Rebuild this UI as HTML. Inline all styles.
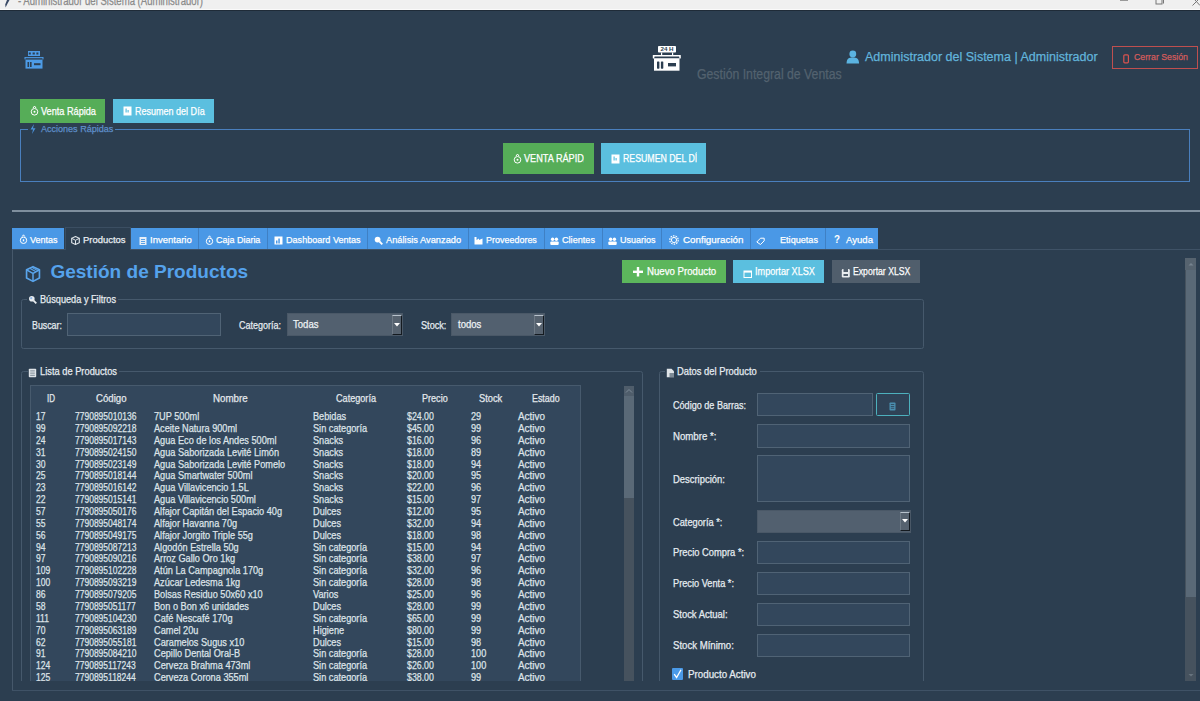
<!DOCTYPE html><html><head><meta charset="utf-8"><style>
html,body{margin:0;padding:0;}
body{width:1200px;height:701px;overflow:hidden;position:relative;background:#2c3e50;font-family:"Liberation Sans",sans-serif;}
.r{position:absolute;}
.t{position:absolute;white-space:nowrap;line-height:1.117em;transform-origin:0 0;-webkit-text-stroke:0.25px currentColor;}
.clip{position:absolute;overflow:hidden;}
</style></head><body>
<div class="r" style="left:0px;top:0px;width:1200px;height:10px;background:#f0f0f0;"></div>
<div class="r" style="left:0px;top:9px;width:1200px;height:1px;background:#fafafa;"></div>
<div class="r" style="left:0px;top:10px;width:1200px;height:1px;background:#1f2b38;"></div>
<span class="t" style="left:18.00px;top:-5.01px;font-size:12.50px;color:#8a8a8a;transform:scaleX(0.7653);">- Administrador del Sistema (Administrador)</span>
<svg class="r" style="left:3px;top:0px;" width="8" height="8" viewBox="0 0 8 8"><path d="M6.5 0 L4 0 L2.2 4.5 L2.6 7.5 L4.2 4.2 Z" fill="#3a4a66"/></svg>
<div class="r" style="left:1120px;top:0px;width:8px;height:1px;background:#9a9a9a;"></div>
<svg class="r" style="left:1155px;top:0px;" width="10" height="6" viewBox="0 0 10 6"><rect x="1" y="-2" width="6" height="6" fill="none" stroke="#777" stroke-width="1"/><path d="M3 -2 H8.5 V3.5" fill="none" stroke="#777" stroke-width="1"/></svg>
<svg class="r" style="left:1192px;top:0px;" width="8" height="6" viewBox="0 0 8 6"><path d="M0.5 5.5 L6 0 M8 5.5 L3 0" stroke="#777" stroke-width="1"/></svg>
<svg class="r" style="left:24px;top:50px;" width="20" height="20" viewBox="0 0 20 20"><g fill="#4d9be6">
<rect x="4" y="1" width="12" height="5"/>
<rect x="0.5" y="7" width="19" height="2.4"/>
<rect x="1.5" y="10" width="17" height="8.6"/>
</g><g fill="#2c3e50"><rect x="4.8" y="2.5" width="2" height="2"/><rect x="8.6" y="2.5" width="2.2" height="2"/><rect x="12.4" y="2.5" width="2" height="2"/>
<rect x="1.5" y="7.9" width="17" height="0.9"/><rect x="3.5" y="12" width="1.6" height="5"/><rect x="6" y="12" width="1.6" height="5"/><rect x="10" y="13.2" width="6.5" height="2"/></g></svg>
<svg class="r" style="left:652px;top:45px;" width="30" height="27" viewBox="0 0 30 27"><g fill="#ffffff">
<rect x="6" y="1" width="18" height="6.5" rx="0.8"/>
<rect x="9" y="7.5" width="1.2" height="2.5"/><rect x="20" y="7.5" width="1.2" height="2.5"/>
<rect x="0.8" y="10" width="28" height="3.5" rx="0.5"/>
<rect x="2" y="13.5" width="25.5" height="12.2"/>
</g><g fill="#2c3e50"><rect x="2.3" y="11.6" width="25" height="1.5" rx="0.5"/>
<rect x="5" y="16.4" width="2.4" height="7.3" rx="0.6"/><rect x="8.9" y="16.4" width="2.4" height="7.3" rx="0.6"/><rect x="16" y="18" width="8" height="3.4"/></g>
<text x="15" y="6.3" font-size="6.2" font-weight="bold" font-family="Liberation Sans" fill="#2c3e50" text-anchor="middle">24 H</text></svg>
<span class="t" style="left:697.30px;top:67.31px;font-size:14.24px;color:#53626f;transform:scaleX(0.8619);">Gestión Integral de Ventas</span>
<svg class="r" style="left:846px;top:50px;" width="14" height="14" viewBox="0 0 14 14"><circle cx="6.8" cy="4" r="3.4" fill="#5bb3e0"/><path d="M0.5 13.5 C0.8 8.5 3 7.6 6.8 7.6 C10.6 7.6 12.8 8.5 13.1 13.5 Z" fill="#5bb3e0"/></svg>
<span class="t" style="left:865.30px;top:49.24px;font-size:13.66px;color:#62b5dc;transform:scaleX(0.9156);">Administrador del Sistema | Administrador</span>
<div class="r" style="left:1112px;top:46px;width:86px;height:22.5px;border:1px solid #bf4f4f;box-sizing:border-box;"></div>
<svg class="r" style="left:1123px;top:54px;" width="7" height="10" viewBox="0 0 7 10"><rect x="0.8" y="0.8" width="4.6" height="8" rx="1" fill="none" stroke="#d9534f" stroke-width="1.2"/></svg>
<span class="t" style="left:1134.00px;top:51.79px;font-size:9.74px;color:#d45c5c;transform:scaleX(0.8989);">Cerrar Sesión</span>
<div class="r" style="left:20px;top:99px;width:85px;height:23.5px;background:#56ad58;"></div>
<svg class="r" style="left:30px;top:105px;" width="9" height="11" viewBox="0 0 9 11"><circle cx="4.5" cy="6.8" r="3.3" fill="none" stroke="#fff" stroke-width="1"/><path d="M3 3 L4.5 1 L6 3" fill="none" stroke="#fff" stroke-width="1"/><circle cx="4.5" cy="6.8" r="1" fill="#fff"/></svg>
<span class="t" style="left:41.00px;top:105.07px;font-size:10.76px;color:#ffffff;transform:scaleX(0.8514);">Venta Rápida</span>
<div class="r" style="left:113px;top:99px;width:101px;height:23.5px;background:#5bbfdf;"></div>
<svg class="r" style="left:123px;top:106px;" width="10" height="10" viewBox="0 0 10 10"><rect x="0.5" y="0.5" width="8" height="9" fill="#fff"/><rect x="2.5" y="2.5" width="1.2" height="4" fill="#5bbfdf"/><rect x="4.5" y="4" width="1.2" height="2.5" fill="#5bbfdf"/></svg>
<span class="t" style="left:134.70px;top:105.07px;font-size:10.76px;color:#ffffff;transform:scaleX(0.8386);">Resumen del Día</span>
<div class="r" style="left:20px;top:129px;width:1px;height:53px;background:#4a7fbd;"></div>
<div class="r" style="left:20px;top:181px;width:1170px;height:1px;background:#4a7fbd;"></div>
<div class="r" style="left:1189px;top:129px;width:1px;height:53px;background:#4a7fbd;"></div>
<div class="r" style="left:20px;top:129px;width:8px;height:1px;background:#4a7fbd;"></div>
<div class="r" style="left:115px;top:129px;width:1075px;height:1px;background:#4a7fbd;"></div>
<svg class="r" style="left:30px;top:124px;" width="6" height="10" viewBox="0 0 6 10"><path d="M4 0 L0.5 5.5 L3 5.5 L2 10 L5.5 4.3 L3 4.3 Z" fill="#4a90d9"/></svg>
<span class="t" style="left:41.00px;top:123.69px;font-size:9.74px;color:#5f8fca;transform:scaleX(0.9276);">Acciones Rápidas</span>
<div class="r" style="left:503px;top:143px;width:91px;height:31px;background:#56ad58;"></div>
<svg class="r" style="left:513px;top:153px;" width="9" height="11" viewBox="0 0 9 11"><circle cx="4.5" cy="6.8" r="3.3" fill="none" stroke="#fff" stroke-width="1"/><path d="M3 3 L4.5 1 L6 3" fill="none" stroke="#fff" stroke-width="1"/><circle cx="4.5" cy="6.8" r="1" fill="#fff"/></svg>
<div class="clip" style="left:523.3px;top:150.9px;width:60.5px;height:13.8px"><span class="t" style="left:524.30px;top:152.90px;font-size:10.61px;color:#ffffff;transform:scaleX(0.8632);left:1.00px;top:2px">VENTA RÁPIDA</span></div>
<div class="r" style="left:601px;top:143px;width:105px;height:31px;background:#5bbfdf;"></div>
<svg class="r" style="left:611px;top:154px;" width="10" height="10" viewBox="0 0 10 10"><rect x="0.5" y="0.5" width="8" height="9" fill="#fff"/><rect x="2.5" y="2.5" width="1.2" height="4" fill="#5bbfdf"/><rect x="4.5" y="4" width="1.2" height="2.5" fill="#5bbfdf"/></svg>
<div class="clip" style="left:622.3px;top:150.9px;width:74.5px;height:13.8px"><span class="t" style="left:623.30px;top:152.90px;font-size:10.61px;color:#ffffff;transform:scaleX(0.8257);left:1.00px;top:2px">RESUMEN DEL DÍA</span></div>
<div class="r" style="left:12px;top:210px;width:1188px;height:2px;background:#7f8f9e;"></div>
<div class="r" style="left:12px;top:249px;width:1188px;height:1px;background:#3f5266;"></div>
<div class="r" style="left:12px;top:249px;width:1px;height:442px;background:#46586b;"></div>
<div class="r" style="left:12px;top:690px;width:1188px;height:1px;background:#3f5266;"></div>
<div class="r" style="left:12px;top:228px;width:52px;height:21px;background:#4a98e6;"></div>
<span class="t" style="left:30.30px;top:233.96px;font-size:9.88px;color:#ffffff;transform:scaleX(0.9099);">Ventas</span>
<div class="r" style="left:65px;top:227px;width:66px;height:23px;background:#2c3e50;border:1px solid #3b4e62;box-sizing:border-box;border-bottom:none;"></div>
<span class="t" style="left:82.80px;top:233.96px;font-size:9.88px;color:#e8edf1;transform:scaleX(0.9574);">Productos</span>
<div class="r" style="left:131px;top:228px;width:67px;height:21px;background:#4a98e6;"></div>
<span class="t" style="left:149.70px;top:233.96px;font-size:9.88px;color:#ffffff;transform:scaleX(0.9629);">Inventario</span>
<div class="r" style="left:198px;top:228px;width:69px;height:21px;background:#4a98e6;"></div>
<div class="r" style="left:198px;top:228px;width:1px;height:21px;background:#3f80c4;"></div>
<span class="t" style="left:216.40px;top:233.96px;font-size:9.88px;color:#ffffff;transform:scaleX(0.9081);">Caja Diaria</span>
<div class="r" style="left:267px;top:228px;width:100px;height:21px;background:#4a98e6;"></div>
<div class="r" style="left:267px;top:228px;width:1px;height:21px;background:#3f80c4;"></div>
<span class="t" style="left:285.80px;top:233.96px;font-size:9.88px;color:#ffffff;transform:scaleX(0.9186);">Dashboard Ventas</span>
<div class="r" style="left:367px;top:228px;width:101px;height:21px;background:#4a98e6;"></div>
<div class="r" style="left:367px;top:228px;width:1px;height:21px;background:#3f80c4;"></div>
<span class="t" style="left:385.60px;top:233.96px;font-size:9.88px;color:#ffffff;transform:scaleX(0.9395);">Análisis Avanzado</span>
<div class="r" style="left:468px;top:228px;width:76px;height:21px;background:#4a98e6;"></div>
<div class="r" style="left:468px;top:228px;width:1px;height:21px;background:#3f80c4;"></div>
<span class="t" style="left:485.70px;top:233.96px;font-size:9.88px;color:#ffffff;transform:scaleX(0.9083);">Proveedores</span>
<div class="r" style="left:544px;top:228px;width:58px;height:21px;background:#4a98e6;"></div>
<div class="r" style="left:544px;top:228px;width:1px;height:21px;background:#3f80c4;"></div>
<span class="t" style="left:561.50px;top:233.96px;font-size:9.88px;color:#ffffff;transform:scaleX(0.9241);">Clientes</span>
<div class="r" style="left:602px;top:228px;width:59px;height:21px;background:#4a98e6;"></div>
<div class="r" style="left:602px;top:228px;width:1px;height:21px;background:#3f80c4;"></div>
<span class="t" style="left:619.50px;top:233.96px;font-size:9.88px;color:#ffffff;transform:scaleX(0.9102);">Usuarios</span>
<div class="r" style="left:661px;top:228px;width:89px;height:21px;background:#4a98e6;"></div>
<div class="r" style="left:661px;top:228px;width:1px;height:21px;background:#3f80c4;"></div>
<span class="t" style="left:682.50px;top:233.96px;font-size:9.88px;color:#ffffff;transform:scaleX(0.9921);">Configuración</span>
<div class="r" style="left:750px;top:228px;width:75px;height:21px;background:#4a98e6;"></div>
<div class="r" style="left:750px;top:228px;width:1px;height:21px;background:#3f80c4;"></div>
<span class="t" style="left:780.00px;top:233.96px;font-size:9.88px;color:#ffffff;transform:scaleX(0.9222);">Etiquetas</span>
<div class="r" style="left:825px;top:228px;width:53px;height:21px;background:#4a98e6;"></div>
<div class="r" style="left:825px;top:228px;width:1px;height:21px;background:#3f80c4;"></div>
<span class="t" style="left:845.50px;top:233.96px;font-size:9.88px;color:#ffffff;transform:scaleX(0.9694);">Ayuda</span>
<svg class="r" style="left:18.5px;top:234px;" width="9" height="10" viewBox="0 0 9 10"><circle cx="4.5" cy="6.3" r="3.2" fill="none" stroke="#ffffff" stroke-width="1"/><path d="M3.2 2.6 L4.5 0.8 L5.8 2.6" fill="none" stroke="#ffffff" stroke-width="1"/><rect x="3.8" y="5.3" width="1.4" height="2" fill="#ffffff"/></svg>
<svg class="r" style="left:71px;top:236px;" width="9" height="9" viewBox="0 0 9 9"><path d="M4.5 0.5 L8.3 2.3 L8.3 6.7 L4.5 8.5 L0.7 6.7 L0.7 2.3 Z" fill="none" stroke="#dfe5ea" stroke-width="1.1"/><path d="M0.7 2.3 L4.5 4.3 L8.3 2.3 M4.5 4.3 V8.5" fill="none" stroke="#dfe5ea" stroke-width="1"/></svg>
<svg class="r" style="left:139px;top:236px;" width="8" height="9" viewBox="0 0 8 9"><rect x="0.5" y="1" width="7" height="8" fill="#e6eef8"/><rect x="2" y="3" width="4" height="0.9" fill="#4a98e6"/><rect x="2" y="5" width="4" height="0.9" fill="#4a98e6"/><rect x="2" y="7" width="4" height="0.9" fill="#4a98e6"/></svg>
<svg class="r" style="left:205px;top:235px;" width="9" height="10" viewBox="0 0 9 10"><circle cx="4.5" cy="6.3" r="3.2" fill="none" stroke="#ffffff" stroke-width="1"/><path d="M3.2 2.6 L4.5 0.8 L5.8 2.6" fill="none" stroke="#ffffff" stroke-width="1"/><rect x="3.8" y="5.3" width="1.4" height="2" fill="#ffffff"/></svg>
<svg class="r" style="left:274px;top:236px;" width="9" height="9" viewBox="0 0 9 9"><rect x="0.5" y="0.5" width="8" height="8" fill="#ffffff"/><rect x="2" y="4.5" width="1.5" height="3" fill="#4a98e6"/><rect x="4.3" y="2.5" width="1.5" height="5" fill="#4a98e6"/></svg>
<svg class="r" style="left:374px;top:236px;" width="9" height="9" viewBox="0 0 9 9"><circle cx="3.6" cy="3.6" r="2.9" fill="#ffffff"/><path d="M5.5 5.5 L8.3 8.3" stroke="#ffffff" stroke-width="1.8"/></svg>
<svg class="r" style="left:474px;top:236px;" width="9" height="9" viewBox="0 0 9 9"><path d="M0.5 8.5 V1 H2.5 V4 L5 2.5 V4 L8.5 2.5 V8.5 Z" fill="#ffffff"/></svg>
<svg class="r" style="left:550px;top:237px;" width="9" height="8" viewBox="0 0 9 8"><circle cx="2.6" cy="2.3" r="1.7" fill="#fff"/><circle cx="6.4" cy="2.3" r="1.7" fill="#fff"/><rect x="0.3" y="4.5" width="8.4" height="3.5" rx="1" fill="#fff"/></svg>
<svg class="r" style="left:608px;top:237px;" width="9" height="8" viewBox="0 0 9 8"><circle cx="2.6" cy="2.3" r="1.7" fill="#fff"/><circle cx="6.4" cy="2.3" r="1.7" fill="#fff"/><rect x="0.3" y="4.5" width="8.4" height="3.5" rx="1" fill="#fff"/></svg>
<svg class="r" style="left:668px;top:234px;" width="12" height="12" viewBox="0 0 12 12"><circle cx="6" cy="6" r="4.2" fill="none" stroke="#fff" stroke-width="1.2" stroke-dasharray="1.6 1"/><circle cx="6" cy="6" r="2.6" fill="none" stroke="#fff" stroke-width="1"/></svg>
<svg class="r" style="left:756px;top:237px;" width="9" height="8" viewBox="0 0 9 8"><path d="M0.8 5 L4.5 1.2 L8.2 1.2 L8.2 3.8 L4.5 7.5 Z" fill="none" stroke="#fff" stroke-width="1"/></svg>
<span class="t" style="left:834.00px;top:232.48px;font-size:11.63px;color:#ffffff;font-weight:bold;-webkit-text-stroke:0;transform:scaleX(0.8445);">?</span>
<svg class="r" style="left:24px;top:264px;" width="18" height="19" viewBox="0 0 18 19"><g transform="translate(9 10) scale(0.92) translate(-9 -9.5)"><path d="M9 1.5 L16 5 L16 13.8 L9 17.5 L2 13.8 L2 5 Z" fill="none" stroke="#5aa5ec" stroke-width="1.8" stroke-linejoin="round"/><path d="M2 5 L9 8.8 L16 5 M9 8.8 V17.5" fill="none" stroke="#5aa5ec" stroke-width="1.6"/><path d="M5.3 3.3 L12.4 7 M7.6 2.3 L14.5 6" stroke="#5aa5ec" stroke-width="1.1"/></g></svg>
<span class="t" style="left:50.40px;top:261.37px;font-size:19.04px;color:#55a2ec;font-weight:bold;-webkit-text-stroke:0;">Gestión de Productos</span>
<div class="r" style="left:622px;top:260px;width:104px;height:23px;background:#5cb65c;"></div>
<svg class="r" style="left:633px;top:267px;" width="10" height="10" viewBox="0 0 10 10"><rect x="3.8" y="0" width="2.4" height="9.5" fill="#fff"/><rect x="0" y="3.6" width="10" height="2.4" fill="#fff"/></svg>
<span class="t" style="left:646.50px;top:266.40px;font-size:10.61px;color:#ffffff;transform:scaleX(0.9095);">Nuevo Producto</span>
<div class="r" style="left:733px;top:260px;width:91px;height:23px;background:#5bbfdf;"></div>
<svg class="r" style="left:743px;top:269px;" width="10" height="10" viewBox="0 0 10 10"><rect x="1" y="2" width="7.5" height="6.5" fill="none" stroke="#fff" stroke-width="1"/><rect x="1" y="2" width="7.5" height="1.6" fill="#fff"/></svg>
<span class="t" style="left:754.50px;top:266.40px;font-size:10.61px;color:#ffffff;transform:scaleX(0.8608);">Importar XLSX</span>
<div class="r" style="left:831.5px;top:260px;width:88.0px;height:23px;background:#505e6c;"></div>
<svg class="r" style="left:841px;top:268px;" width="10" height="10" viewBox="0 0 10 10"><rect x="0.8" y="1" width="8" height="8.5" rx="1.2" fill="#e8ecef"/><rect x="2.5" y="1" width="4.5" height="3" fill="#505e6c"/><rect x="2.5" y="6" width="4.5" height="2" fill="#505e6c"/></svg>
<span class="t" style="left:852.70px;top:266.40px;font-size:10.61px;color:#ffffff;transform:scaleX(0.8165);">Exportar XLSX</span>
<div class="r" style="left:1185px;top:258px;width:11px;height:423px;background:#46525e;"></div>
<div class="r" style="left:1185px;top:258px;width:11px;height:12px;background:#56636f;"></div>
<svg class="r" style="left:1187px;top:261px;" width="8" height="6" viewBox="0 0 8 6"><path d="M1.5 4.5 L4 2 L6.5 4.5 Z" fill="#76838f"/></svg>
<div class="r" style="left:1186px;top:270px;width:10px;height:327px;background:#5a6977;"></div>
<svg class="r" style="left:1187px;top:673px;" width="8" height="6" viewBox="0 0 8 6"><path d="M1.5 1 L4 3.5 L6.5 1 Z" fill="#68747f"/></svg>
<div class="r" style="left:21px;top:299px;width:903px;height:50px;border:1px solid #46596c;box-sizing:border-box;border-radius:2.5px;"></div>
<div class="r" style="left:27px;top:298px;width:91px;height:3px;background:#2c3e50;"></div>
<svg class="r" style="left:28px;top:295px;" width="9" height="9" viewBox="0 0 9 9"><circle cx="3.8" cy="3.8" r="2.8" fill="#e8ecef"/><path d="M5.6 5.6 L8.3 8.3" stroke="#e8ecef" stroke-width="1.8"/><circle cx="3.2" cy="3.2" r="1.1" fill="#8fb8e8"/></svg>
<span class="t" style="left:39.75px;top:294.00px;font-size:10.61px;color:#e6ecf0;transform:scaleX(0.8649);">Búsqueda y Filtros</span>
<span class="t" style="left:31.90px;top:319.70px;font-size:10.61px;color:#e6ecf0;transform:scaleX(0.8313);">Buscar:</span>
<div class="r" style="left:67px;top:313px;width:154px;height:23px;background:#33475c;border:1px solid #506375;box-sizing:border-box;"></div>
<span class="t" style="left:238.80px;top:319.70px;font-size:10.61px;color:#e6ecf0;transform:scaleX(0.8498);">Categoría:</span>
<div class="r" style="left:287px;top:313px;width:116px;height:23px;background:#52606f;border:1px solid #4a5867;box-sizing:border-box;"></div>
<div class="r" style="left:392px;top:314.5px;width:10px;height:20.30000000000001px;background:#56626f;border-top:1px solid #b8c2cc;border-left:1px solid #6d7985;border-right:1.5px solid #141a20;border-bottom:1.5px solid #141a20;box-sizing:border-box;"></div>
<svg class="r" style="left:394px;top:322.5px;" width="6" height="4" viewBox="0 0 6 4"><path d="M0 0 H6 L3 3.5 Z" fill="#ffffff"/></svg>
<span class="t" style="left:292.70px;top:318.50px;font-size:10.61px;color:#eef2f5;transform:scaleX(0.9000);">Todas</span>
<span class="t" style="left:421.00px;top:319.70px;font-size:10.61px;color:#e6ecf0;transform:scaleX(0.8614);">Stock:</span>
<div class="r" style="left:451.4px;top:313px;width:93.60000000000002px;height:23px;background:#52606f;border:1px solid #4a5867;box-sizing:border-box;"></div>
<div class="r" style="left:534px;top:314.5px;width:10px;height:20.30000000000001px;background:#56626f;border-top:1px solid #b8c2cc;border-left:1px solid #6d7985;border-right:1.5px solid #141a20;border-bottom:1.5px solid #141a20;box-sizing:border-box;"></div>
<svg class="r" style="left:536px;top:322.5px;" width="6" height="4" viewBox="0 0 6 4"><path d="M0 0 H6 L3 3.5 Z" fill="#ffffff"/></svg>
<span class="t" style="left:457.70px;top:318.50px;font-size:10.61px;color:#eef2f5;transform:scaleX(0.9000);">todos</span>
<div class="r" style="left:0;top:0;width:1200px;height:681px;overflow:hidden">
<div class="r" style="left:21px;top:371px;width:622px;height:329px;border:1px solid #46596c;box-sizing:border-box;border-radius:2.5px;"></div>
<div class="r" style="left:28px;top:370px;width:91px;height:3px;background:#2c3e50;"></div>
<svg class="r" style="left:28px;top:368px;" width="9" height="10" viewBox="0 0 9 10"><rect x="0.8" y="0.8" width="7.4" height="8.4" rx="0.8" fill="#dfe4e8"/><rect x="2.2" y="2.4" width="4.6" height="1" fill="#7d8a96"/><rect x="2.2" y="4.6" width="4.6" height="1" fill="#7d8a96"/><rect x="2.2" y="6.8" width="4.6" height="1" fill="#7d8a96"/></svg>
<span class="t" style="left:39.50px;top:365.53px;font-size:10.47px;color:#e6ecf0;transform:scaleX(0.8883);">Lista de Productos</span>
<div class="r" style="left:30px;top:385px;width:550.5px;height:315px;background:#33475c;border:1px solid #475a6d;box-sizing:border-box;"></div>
<span class="t" style="left:47.00px;top:393.46px;font-size:10.32px;color:#e3e8ec;transform:scaleX(0.7752);">ID</span>
<span class="t" style="left:95.50px;top:393.46px;font-size:10.32px;color:#e3e8ec;transform:scaleX(0.9326);">Código</span>
<span class="t" style="left:212.80px;top:393.46px;font-size:10.32px;color:#e3e8ec;transform:scaleX(0.9453);">Nombre</span>
<span class="t" style="left:336.40px;top:393.46px;font-size:10.32px;color:#e3e8ec;transform:scaleX(0.8825);">Categoría</span>
<span class="t" style="left:422.40px;top:393.46px;font-size:10.32px;color:#e3e8ec;transform:scaleX(0.8784);">Precio</span>
<span class="t" style="left:479.30px;top:393.46px;font-size:10.32px;color:#e3e8ec;transform:scaleX(0.9020);">Stock</span>
<span class="t" style="left:532.40px;top:393.46px;font-size:10.32px;color:#e3e8ec;transform:scaleX(0.8591);">Estado</span>
<span class="t" style="left:36.00px;top:411.16px;font-size:10.32px;color:#dde3e8;transform:scaleX(0.8300);">17</span>
<span class="t" style="left:74.80px;top:411.16px;font-size:10.32px;color:#dde3e8;transform:scaleX(0.8230);">7790895010136</span>
<span class="t" style="left:154.20px;top:411.16px;font-size:10.32px;color:#dde3e8;transform:scaleX(0.8900);">7UP 500ml</span>
<span class="t" style="left:312.50px;top:411.16px;font-size:10.32px;color:#dde3e8;transform:scaleX(0.8900);">Bebidas</span>
<span class="t" style="left:407.30px;top:411.16px;font-size:10.32px;color:#dde3e8;transform:scaleX(0.8500);">$24.00</span>
<span class="t" style="left:470.60px;top:411.16px;font-size:10.32px;color:#dde3e8;transform:scaleX(0.8900);">29</span>
<span class="t" style="left:518.20px;top:411.16px;font-size:10.32px;color:#dde3e8;transform:scaleX(0.9600);">Activo</span>
<span class="t" style="left:36.00px;top:423.02px;font-size:10.32px;color:#dde3e8;transform:scaleX(0.8300);">99</span>
<span class="t" style="left:74.80px;top:423.02px;font-size:10.32px;color:#dde3e8;transform:scaleX(0.8230);">7790895092218</span>
<span class="t" style="left:154.20px;top:423.02px;font-size:10.32px;color:#dde3e8;transform:scaleX(0.8900);">Aceite Natura 900ml</span>
<span class="t" style="left:312.50px;top:423.02px;font-size:10.32px;color:#dde3e8;transform:scaleX(0.8900);">Sin categoría</span>
<span class="t" style="left:407.30px;top:423.02px;font-size:10.32px;color:#dde3e8;transform:scaleX(0.8500);">$45.00</span>
<span class="t" style="left:470.60px;top:423.02px;font-size:10.32px;color:#dde3e8;transform:scaleX(0.8900);">99</span>
<span class="t" style="left:518.20px;top:423.02px;font-size:10.32px;color:#dde3e8;transform:scaleX(0.9600);">Activo</span>
<span class="t" style="left:36.00px;top:434.88px;font-size:10.32px;color:#dde3e8;transform:scaleX(0.8300);">24</span>
<span class="t" style="left:74.80px;top:434.88px;font-size:10.32px;color:#dde3e8;transform:scaleX(0.8230);">7790895017143</span>
<span class="t" style="left:154.20px;top:434.88px;font-size:10.32px;color:#dde3e8;transform:scaleX(0.8900);">Agua Eco de los Andes 500ml</span>
<span class="t" style="left:312.50px;top:434.88px;font-size:10.32px;color:#dde3e8;transform:scaleX(0.8900);">Snacks</span>
<span class="t" style="left:407.30px;top:434.88px;font-size:10.32px;color:#dde3e8;transform:scaleX(0.8500);">$16.00</span>
<span class="t" style="left:470.60px;top:434.88px;font-size:10.32px;color:#dde3e8;transform:scaleX(0.8900);">96</span>
<span class="t" style="left:518.20px;top:434.88px;font-size:10.32px;color:#dde3e8;transform:scaleX(0.9600);">Activo</span>
<span class="t" style="left:36.00px;top:446.74px;font-size:10.32px;color:#dde3e8;transform:scaleX(0.8300);">31</span>
<span class="t" style="left:74.80px;top:446.74px;font-size:10.32px;color:#dde3e8;transform:scaleX(0.8230);">7790895024150</span>
<span class="t" style="left:154.20px;top:446.74px;font-size:10.32px;color:#dde3e8;transform:scaleX(0.8900);">Agua Saborizada Levité Limón</span>
<span class="t" style="left:312.50px;top:446.74px;font-size:10.32px;color:#dde3e8;transform:scaleX(0.8900);">Snacks</span>
<span class="t" style="left:407.30px;top:446.74px;font-size:10.32px;color:#dde3e8;transform:scaleX(0.8500);">$18.00</span>
<span class="t" style="left:470.60px;top:446.74px;font-size:10.32px;color:#dde3e8;transform:scaleX(0.8900);">89</span>
<span class="t" style="left:518.20px;top:446.74px;font-size:10.32px;color:#dde3e8;transform:scaleX(0.9600);">Activo</span>
<span class="t" style="left:36.00px;top:458.60px;font-size:10.32px;color:#dde3e8;transform:scaleX(0.8300);">30</span>
<span class="t" style="left:74.80px;top:458.60px;font-size:10.32px;color:#dde3e8;transform:scaleX(0.8230);">7790895023149</span>
<span class="t" style="left:154.20px;top:458.60px;font-size:10.32px;color:#dde3e8;transform:scaleX(0.8900);">Agua Saborizada Levité Pomelo</span>
<span class="t" style="left:312.50px;top:458.60px;font-size:10.32px;color:#dde3e8;transform:scaleX(0.8900);">Snacks</span>
<span class="t" style="left:407.30px;top:458.60px;font-size:10.32px;color:#dde3e8;transform:scaleX(0.8500);">$18.00</span>
<span class="t" style="left:470.60px;top:458.60px;font-size:10.32px;color:#dde3e8;transform:scaleX(0.8900);">94</span>
<span class="t" style="left:518.20px;top:458.60px;font-size:10.32px;color:#dde3e8;transform:scaleX(0.9600);">Activo</span>
<span class="t" style="left:36.00px;top:470.46px;font-size:10.32px;color:#dde3e8;transform:scaleX(0.8300);">25</span>
<span class="t" style="left:74.80px;top:470.46px;font-size:10.32px;color:#dde3e8;transform:scaleX(0.8230);">7790895018144</span>
<span class="t" style="left:154.20px;top:470.46px;font-size:10.32px;color:#dde3e8;transform:scaleX(0.8900);">Agua Smartwater 500ml</span>
<span class="t" style="left:312.50px;top:470.46px;font-size:10.32px;color:#dde3e8;transform:scaleX(0.8900);">Snacks</span>
<span class="t" style="left:407.30px;top:470.46px;font-size:10.32px;color:#dde3e8;transform:scaleX(0.8500);">$20.00</span>
<span class="t" style="left:470.60px;top:470.46px;font-size:10.32px;color:#dde3e8;transform:scaleX(0.8900);">95</span>
<span class="t" style="left:518.20px;top:470.46px;font-size:10.32px;color:#dde3e8;transform:scaleX(0.9600);">Activo</span>
<span class="t" style="left:36.00px;top:482.32px;font-size:10.32px;color:#dde3e8;transform:scaleX(0.8300);">23</span>
<span class="t" style="left:74.80px;top:482.32px;font-size:10.32px;color:#dde3e8;transform:scaleX(0.8230);">7790895016142</span>
<span class="t" style="left:154.20px;top:482.32px;font-size:10.32px;color:#dde3e8;transform:scaleX(0.8900);">Agua Villavicencio 1.5L</span>
<span class="t" style="left:312.50px;top:482.32px;font-size:10.32px;color:#dde3e8;transform:scaleX(0.8900);">Snacks</span>
<span class="t" style="left:407.30px;top:482.32px;font-size:10.32px;color:#dde3e8;transform:scaleX(0.8500);">$22.00</span>
<span class="t" style="left:470.60px;top:482.32px;font-size:10.32px;color:#dde3e8;transform:scaleX(0.8900);">96</span>
<span class="t" style="left:518.20px;top:482.32px;font-size:10.32px;color:#dde3e8;transform:scaleX(0.9600);">Activo</span>
<span class="t" style="left:36.00px;top:494.18px;font-size:10.32px;color:#dde3e8;transform:scaleX(0.8300);">22</span>
<span class="t" style="left:74.80px;top:494.18px;font-size:10.32px;color:#dde3e8;transform:scaleX(0.8230);">7790895015141</span>
<span class="t" style="left:154.20px;top:494.18px;font-size:10.32px;color:#dde3e8;transform:scaleX(0.8900);">Agua Villavicencio 500ml</span>
<span class="t" style="left:312.50px;top:494.18px;font-size:10.32px;color:#dde3e8;transform:scaleX(0.8900);">Snacks</span>
<span class="t" style="left:407.30px;top:494.18px;font-size:10.32px;color:#dde3e8;transform:scaleX(0.8500);">$15.00</span>
<span class="t" style="left:470.60px;top:494.18px;font-size:10.32px;color:#dde3e8;transform:scaleX(0.8900);">97</span>
<span class="t" style="left:518.20px;top:494.18px;font-size:10.32px;color:#dde3e8;transform:scaleX(0.9600);">Activo</span>
<span class="t" style="left:36.00px;top:506.04px;font-size:10.32px;color:#dde3e8;transform:scaleX(0.8300);">57</span>
<span class="t" style="left:74.80px;top:506.04px;font-size:10.32px;color:#dde3e8;transform:scaleX(0.8230);">7790895050176</span>
<span class="t" style="left:154.20px;top:506.04px;font-size:10.32px;color:#dde3e8;transform:scaleX(0.8900);">Alfajor Capitán del Espacio 40g</span>
<span class="t" style="left:312.50px;top:506.04px;font-size:10.32px;color:#dde3e8;transform:scaleX(0.8900);">Dulces</span>
<span class="t" style="left:407.30px;top:506.04px;font-size:10.32px;color:#dde3e8;transform:scaleX(0.8500);">$12.00</span>
<span class="t" style="left:470.60px;top:506.04px;font-size:10.32px;color:#dde3e8;transform:scaleX(0.8900);">95</span>
<span class="t" style="left:518.20px;top:506.04px;font-size:10.32px;color:#dde3e8;transform:scaleX(0.9600);">Activo</span>
<span class="t" style="left:36.00px;top:517.90px;font-size:10.32px;color:#dde3e8;transform:scaleX(0.8300);">55</span>
<span class="t" style="left:74.80px;top:517.90px;font-size:10.32px;color:#dde3e8;transform:scaleX(0.8230);">7790895048174</span>
<span class="t" style="left:154.20px;top:517.90px;font-size:10.32px;color:#dde3e8;transform:scaleX(0.8900);">Alfajor Havanna 70g</span>
<span class="t" style="left:312.50px;top:517.90px;font-size:10.32px;color:#dde3e8;transform:scaleX(0.8900);">Dulces</span>
<span class="t" style="left:407.30px;top:517.90px;font-size:10.32px;color:#dde3e8;transform:scaleX(0.8500);">$32.00</span>
<span class="t" style="left:470.60px;top:517.90px;font-size:10.32px;color:#dde3e8;transform:scaleX(0.8900);">94</span>
<span class="t" style="left:518.20px;top:517.90px;font-size:10.32px;color:#dde3e8;transform:scaleX(0.9600);">Activo</span>
<span class="t" style="left:36.00px;top:529.76px;font-size:10.32px;color:#dde3e8;transform:scaleX(0.8300);">56</span>
<span class="t" style="left:74.80px;top:529.76px;font-size:10.32px;color:#dde3e8;transform:scaleX(0.8230);">7790895049175</span>
<span class="t" style="left:154.20px;top:529.76px;font-size:10.32px;color:#dde3e8;transform:scaleX(0.8900);">Alfajor Jorgito Triple 55g</span>
<span class="t" style="left:312.50px;top:529.76px;font-size:10.32px;color:#dde3e8;transform:scaleX(0.8900);">Dulces</span>
<span class="t" style="left:407.30px;top:529.76px;font-size:10.32px;color:#dde3e8;transform:scaleX(0.8500);">$18.00</span>
<span class="t" style="left:470.60px;top:529.76px;font-size:10.32px;color:#dde3e8;transform:scaleX(0.8900);">98</span>
<span class="t" style="left:518.20px;top:529.76px;font-size:10.32px;color:#dde3e8;transform:scaleX(0.9600);">Activo</span>
<span class="t" style="left:36.00px;top:541.62px;font-size:10.32px;color:#dde3e8;transform:scaleX(0.8300);">94</span>
<span class="t" style="left:74.80px;top:541.62px;font-size:10.32px;color:#dde3e8;transform:scaleX(0.8230);">7790895087213</span>
<span class="t" style="left:154.20px;top:541.62px;font-size:10.32px;color:#dde3e8;transform:scaleX(0.8900);">Algodón Estrella 50g</span>
<span class="t" style="left:312.50px;top:541.62px;font-size:10.32px;color:#dde3e8;transform:scaleX(0.8900);">Sin categoría</span>
<span class="t" style="left:407.30px;top:541.62px;font-size:10.32px;color:#dde3e8;transform:scaleX(0.8500);">$15.00</span>
<span class="t" style="left:470.60px;top:541.62px;font-size:10.32px;color:#dde3e8;transform:scaleX(0.8900);">94</span>
<span class="t" style="left:518.20px;top:541.62px;font-size:10.32px;color:#dde3e8;transform:scaleX(0.9600);">Activo</span>
<span class="t" style="left:36.00px;top:553.48px;font-size:10.32px;color:#dde3e8;transform:scaleX(0.8300);">97</span>
<span class="t" style="left:74.80px;top:553.48px;font-size:10.32px;color:#dde3e8;transform:scaleX(0.8230);">7790895090216</span>
<span class="t" style="left:154.20px;top:553.48px;font-size:10.32px;color:#dde3e8;transform:scaleX(0.8900);">Arroz Gallo Oro 1kg</span>
<span class="t" style="left:312.50px;top:553.48px;font-size:10.32px;color:#dde3e8;transform:scaleX(0.8900);">Sin categoría</span>
<span class="t" style="left:407.30px;top:553.48px;font-size:10.32px;color:#dde3e8;transform:scaleX(0.8500);">$38.00</span>
<span class="t" style="left:470.60px;top:553.48px;font-size:10.32px;color:#dde3e8;transform:scaleX(0.8900);">97</span>
<span class="t" style="left:518.20px;top:553.48px;font-size:10.32px;color:#dde3e8;transform:scaleX(0.9600);">Activo</span>
<span class="t" style="left:36.00px;top:565.34px;font-size:10.32px;color:#dde3e8;transform:scaleX(0.8300);">109</span>
<span class="t" style="left:74.80px;top:565.34px;font-size:10.32px;color:#dde3e8;transform:scaleX(0.8230);">7790895102228</span>
<span class="t" style="left:154.20px;top:565.34px;font-size:10.32px;color:#dde3e8;transform:scaleX(0.8900);">Atún La Campagnola 170g</span>
<span class="t" style="left:312.50px;top:565.34px;font-size:10.32px;color:#dde3e8;transform:scaleX(0.8900);">Sin categoría</span>
<span class="t" style="left:407.30px;top:565.34px;font-size:10.32px;color:#dde3e8;transform:scaleX(0.8500);">$32.00</span>
<span class="t" style="left:470.60px;top:565.34px;font-size:10.32px;color:#dde3e8;transform:scaleX(0.8900);">96</span>
<span class="t" style="left:518.20px;top:565.34px;font-size:10.32px;color:#dde3e8;transform:scaleX(0.9600);">Activo</span>
<span class="t" style="left:36.00px;top:577.20px;font-size:10.32px;color:#dde3e8;transform:scaleX(0.8300);">100</span>
<span class="t" style="left:74.80px;top:577.20px;font-size:10.32px;color:#dde3e8;transform:scaleX(0.8230);">7790895093219</span>
<span class="t" style="left:154.20px;top:577.20px;font-size:10.32px;color:#dde3e8;transform:scaleX(0.8900);">Azúcar Ledesma 1kg</span>
<span class="t" style="left:312.50px;top:577.20px;font-size:10.32px;color:#dde3e8;transform:scaleX(0.8900);">Sin categoría</span>
<span class="t" style="left:407.30px;top:577.20px;font-size:10.32px;color:#dde3e8;transform:scaleX(0.8500);">$28.00</span>
<span class="t" style="left:470.60px;top:577.20px;font-size:10.32px;color:#dde3e8;transform:scaleX(0.8900);">98</span>
<span class="t" style="left:518.20px;top:577.20px;font-size:10.32px;color:#dde3e8;transform:scaleX(0.9600);">Activo</span>
<span class="t" style="left:36.00px;top:589.06px;font-size:10.32px;color:#dde3e8;transform:scaleX(0.8300);">86</span>
<span class="t" style="left:74.80px;top:589.06px;font-size:10.32px;color:#dde3e8;transform:scaleX(0.8230);">7790895079205</span>
<span class="t" style="left:154.20px;top:589.06px;font-size:10.32px;color:#dde3e8;transform:scaleX(0.8900);">Bolsas Residuo 50x60 x10</span>
<span class="t" style="left:312.50px;top:589.06px;font-size:10.32px;color:#dde3e8;transform:scaleX(0.8900);">Varios</span>
<span class="t" style="left:407.30px;top:589.06px;font-size:10.32px;color:#dde3e8;transform:scaleX(0.8500);">$25.00</span>
<span class="t" style="left:470.60px;top:589.06px;font-size:10.32px;color:#dde3e8;transform:scaleX(0.8900);">96</span>
<span class="t" style="left:518.20px;top:589.06px;font-size:10.32px;color:#dde3e8;transform:scaleX(0.9600);">Activo</span>
<span class="t" style="left:36.00px;top:600.92px;font-size:10.32px;color:#dde3e8;transform:scaleX(0.8300);">58</span>
<span class="t" style="left:74.80px;top:600.92px;font-size:10.32px;color:#dde3e8;transform:scaleX(0.8230);">7790895051177</span>
<span class="t" style="left:154.20px;top:600.92px;font-size:10.32px;color:#dde3e8;transform:scaleX(0.8900);">Bon o Bon x6 unidades</span>
<span class="t" style="left:312.50px;top:600.92px;font-size:10.32px;color:#dde3e8;transform:scaleX(0.8900);">Dulces</span>
<span class="t" style="left:407.30px;top:600.92px;font-size:10.32px;color:#dde3e8;transform:scaleX(0.8500);">$28.00</span>
<span class="t" style="left:470.60px;top:600.92px;font-size:10.32px;color:#dde3e8;transform:scaleX(0.8900);">99</span>
<span class="t" style="left:518.20px;top:600.92px;font-size:10.32px;color:#dde3e8;transform:scaleX(0.9600);">Activo</span>
<span class="t" style="left:36.00px;top:612.78px;font-size:10.32px;color:#dde3e8;transform:scaleX(0.8300);">111</span>
<span class="t" style="left:74.80px;top:612.78px;font-size:10.32px;color:#dde3e8;transform:scaleX(0.8230);">7790895104230</span>
<span class="t" style="left:154.20px;top:612.78px;font-size:10.32px;color:#dde3e8;transform:scaleX(0.8900);">Café Nescafé 170g</span>
<span class="t" style="left:312.50px;top:612.78px;font-size:10.32px;color:#dde3e8;transform:scaleX(0.8900);">Sin categoría</span>
<span class="t" style="left:407.30px;top:612.78px;font-size:10.32px;color:#dde3e8;transform:scaleX(0.8500);">$65.00</span>
<span class="t" style="left:470.60px;top:612.78px;font-size:10.32px;color:#dde3e8;transform:scaleX(0.8900);">99</span>
<span class="t" style="left:518.20px;top:612.78px;font-size:10.32px;color:#dde3e8;transform:scaleX(0.9600);">Activo</span>
<span class="t" style="left:36.00px;top:624.64px;font-size:10.32px;color:#dde3e8;transform:scaleX(0.8300);">70</span>
<span class="t" style="left:74.80px;top:624.64px;font-size:10.32px;color:#dde3e8;transform:scaleX(0.8230);">7790895063189</span>
<span class="t" style="left:154.20px;top:624.64px;font-size:10.32px;color:#dde3e8;transform:scaleX(0.8900);">Camel 20u</span>
<span class="t" style="left:312.50px;top:624.64px;font-size:10.32px;color:#dde3e8;transform:scaleX(0.8900);">Higiene</span>
<span class="t" style="left:407.30px;top:624.64px;font-size:10.32px;color:#dde3e8;transform:scaleX(0.8500);">$80.00</span>
<span class="t" style="left:470.60px;top:624.64px;font-size:10.32px;color:#dde3e8;transform:scaleX(0.8900);">99</span>
<span class="t" style="left:518.20px;top:624.64px;font-size:10.32px;color:#dde3e8;transform:scaleX(0.9600);">Activo</span>
<span class="t" style="left:36.00px;top:636.50px;font-size:10.32px;color:#dde3e8;transform:scaleX(0.8300);">62</span>
<span class="t" style="left:74.80px;top:636.50px;font-size:10.32px;color:#dde3e8;transform:scaleX(0.8230);">7790895055181</span>
<span class="t" style="left:154.20px;top:636.50px;font-size:10.32px;color:#dde3e8;transform:scaleX(0.8900);">Caramelos Sugus x10</span>
<span class="t" style="left:312.50px;top:636.50px;font-size:10.32px;color:#dde3e8;transform:scaleX(0.8900);">Dulces</span>
<span class="t" style="left:407.30px;top:636.50px;font-size:10.32px;color:#dde3e8;transform:scaleX(0.8500);">$15.00</span>
<span class="t" style="left:470.60px;top:636.50px;font-size:10.32px;color:#dde3e8;transform:scaleX(0.8900);">98</span>
<span class="t" style="left:518.20px;top:636.50px;font-size:10.32px;color:#dde3e8;transform:scaleX(0.9600);">Activo</span>
<span class="t" style="left:36.00px;top:648.36px;font-size:10.32px;color:#dde3e8;transform:scaleX(0.8300);">91</span>
<span class="t" style="left:74.80px;top:648.36px;font-size:10.32px;color:#dde3e8;transform:scaleX(0.8230);">7790895084210</span>
<span class="t" style="left:154.20px;top:648.36px;font-size:10.32px;color:#dde3e8;transform:scaleX(0.8900);">Cepillo Dental Oral-B</span>
<span class="t" style="left:312.50px;top:648.36px;font-size:10.32px;color:#dde3e8;transform:scaleX(0.8900);">Sin categoría</span>
<span class="t" style="left:407.30px;top:648.36px;font-size:10.32px;color:#dde3e8;transform:scaleX(0.8500);">$28.00</span>
<span class="t" style="left:470.60px;top:648.36px;font-size:10.32px;color:#dde3e8;transform:scaleX(0.8900);">100</span>
<span class="t" style="left:518.20px;top:648.36px;font-size:10.32px;color:#dde3e8;transform:scaleX(0.9600);">Activo</span>
<span class="t" style="left:36.00px;top:660.22px;font-size:10.32px;color:#dde3e8;transform:scaleX(0.8300);">124</span>
<span class="t" style="left:74.80px;top:660.22px;font-size:10.32px;color:#dde3e8;transform:scaleX(0.8230);">7790895117243</span>
<span class="t" style="left:154.20px;top:660.22px;font-size:10.32px;color:#dde3e8;transform:scaleX(0.8900);">Cerveza Brahma 473ml</span>
<span class="t" style="left:312.50px;top:660.22px;font-size:10.32px;color:#dde3e8;transform:scaleX(0.8900);">Sin categoría</span>
<span class="t" style="left:407.30px;top:660.22px;font-size:10.32px;color:#dde3e8;transform:scaleX(0.8500);">$26.00</span>
<span class="t" style="left:470.60px;top:660.22px;font-size:10.32px;color:#dde3e8;transform:scaleX(0.8900);">100</span>
<span class="t" style="left:518.20px;top:660.22px;font-size:10.32px;color:#dde3e8;transform:scaleX(0.9600);">Activo</span>
<span class="t" style="left:36.00px;top:672.08px;font-size:10.32px;color:#dde3e8;transform:scaleX(0.8300);">125</span>
<span class="t" style="left:74.80px;top:672.08px;font-size:10.32px;color:#dde3e8;transform:scaleX(0.8230);">7790895118244</span>
<span class="t" style="left:154.20px;top:672.08px;font-size:10.32px;color:#dde3e8;transform:scaleX(0.8900);">Cerveza Corona 355ml</span>
<span class="t" style="left:312.50px;top:672.08px;font-size:10.32px;color:#dde3e8;transform:scaleX(0.8900);">Sin categoría</span>
<span class="t" style="left:407.30px;top:672.08px;font-size:10.32px;color:#dde3e8;transform:scaleX(0.8500);">$38.00</span>
<span class="t" style="left:470.60px;top:672.08px;font-size:10.32px;color:#dde3e8;transform:scaleX(0.8900);">99</span>
<span class="t" style="left:518.20px;top:672.08px;font-size:10.32px;color:#dde3e8;transform:scaleX(0.9600);">Activo</span>
<div class="r" style="left:624px;top:385.5px;width:10px;height:314.5px;background:#46525e;"></div>
<div class="r" style="left:624px;top:385.5px;width:10px;height:10.5px;background:#4f5d6b;"></div>
<svg class="r" style="left:625px;top:388px;" width="8" height="6" viewBox="0 0 8 6"><path d="M1 4.5 L4 1.5 L7 4.5" fill="none" stroke="#7d8b98" stroke-width="1"/></svg>
<div class="r" style="left:624px;top:396px;width:10px;height:101.5px;background:#5a6977;"></div>
<div class="r" style="left:659px;top:371px;width:265px;height:329px;border:1px solid #46596c;box-sizing:border-box;border-radius:2.5px;"></div>
<div class="r" style="left:665px;top:370px;width:95px;height:3px;background:#2c3e50;"></div>
<svg class="r" style="left:666px;top:368px;" width="9" height="10" viewBox="0 0 9 10"><path d="M0.8 0.8 H5.5 L8 3.3 V9.2 H0.8 Z" fill="#dfe4e8"/><rect x="3.5" y="5" width="4.5" height="4" fill="#7d8a96"/></svg>
<span class="t" style="left:677.20px;top:366.13px;font-size:10.47px;color:#e6ecf0;transform:scaleX(0.8954);">Datos del Producto</span>
<span class="t" style="left:673.00px;top:399.93px;font-size:10.47px;color:#e6ecf0;transform:scaleX(0.8666);">Código de Barras:</span>
<span class="t" style="left:673.00px;top:430.93px;font-size:10.47px;color:#e6ecf0;transform:scaleX(0.9214);">Nombre *:</span>
<span class="t" style="left:673.00px;top:473.63px;font-size:10.47px;color:#e6ecf0;transform:scaleX(0.9000);">Descripción:</span>
<span class="t" style="left:673.00px;top:516.63px;font-size:10.47px;color:#e6ecf0;transform:scaleX(0.8829);">Categoría *:</span>
<span class="t" style="left:673.00px;top:547.33px;font-size:10.47px;color:#e6ecf0;transform:scaleX(0.8923);">Precio Compra *:</span>
<span class="t" style="left:673.00px;top:578.03px;font-size:10.47px;color:#e6ecf0;transform:scaleX(0.8812);">Precio Venta *:</span>
<span class="t" style="left:673.00px;top:609.03px;font-size:10.47px;color:#e6ecf0;transform:scaleX(0.9008);">Stock Actual:</span>
<span class="t" style="left:673.00px;top:639.93px;font-size:10.47px;color:#e6ecf0;transform:scaleX(0.9171);">Stock Mínimo:</span>
<div class="r" style="left:756.5px;top:393px;width:116.0px;height:23px;background:#33475c;border:1px solid #506375;box-sizing:border-box;"></div>
<div class="r" style="left:876px;top:393px;width:33.5px;height:23px;background:#2f4256;border:1.5px solid #4db0bd;box-sizing:border-box;border-radius:1.5px;"></div>
<svg class="r" style="left:889px;top:402px;" width="7" height="9" viewBox="0 0 7 9"><rect x="0.5" y="0.5" width="6" height="8" rx="0.8" fill="#4a8fb0"/><rect x="1.8" y="2.2" width="3.4" height="0.8" fill="#2f4256"/><rect x="1.8" y="4" width="3.4" height="0.8" fill="#2f4256"/><rect x="1.8" y="5.8" width="3.4" height="0.8" fill="#2f4256"/></svg>
<div class="r" style="left:756.5px;top:424px;width:153.5px;height:23.5px;background:#33475c;border:1px solid #506375;box-sizing:border-box;"></div>
<div class="r" style="left:756.5px;top:455px;width:153.5px;height:47px;background:#33475c;border:1px solid #506375;box-sizing:border-box;"></div>
<div class="r" style="left:756.5px;top:510px;width:154.5px;height:22.5px;background:#52606f;border:1px solid #4a5867;box-sizing:border-box;"></div>
<div class="r" style="left:900px;top:511.5px;width:10px;height:19.799999999999955px;background:#56626f;border-top:1px solid #b8c2cc;border-left:1px solid #6d7985;border-right:1.5px solid #141a20;border-bottom:1.5px solid #141a20;box-sizing:border-box;"></div>
<svg class="r" style="left:902px;top:519.25px;" width="6" height="4" viewBox="0 0 6 4"><path d="M0 0 H6 L3 3.5 Z" fill="#ffffff"/></svg>
<div class="r" style="left:756.5px;top:541px;width:153.5px;height:22.5px;background:#33475c;border:1px solid #506375;box-sizing:border-box;"></div>
<div class="r" style="left:756.5px;top:572px;width:153.5px;height:22.5px;background:#33475c;border:1px solid #506375;box-sizing:border-box;"></div>
<div class="r" style="left:756.5px;top:602.5px;width:153.5px;height:23.0px;background:#33475c;border:1px solid #506375;box-sizing:border-box;"></div>
<div class="r" style="left:756.5px;top:633.5px;width:153.5px;height:23.0px;background:#33475c;border:1px solid #506375;box-sizing:border-box;"></div>
<div class="r" style="left:671.5px;top:668px;width:11.5px;height:12px;background:#4a9ae8;border-radius:1px;"></div>
<svg class="r" style="left:672px;top:668px;" width="11" height="12" viewBox="0 0 11 12"><path d="M2.2 6.2 L4.6 9.5 L9 1.8" fill="none" stroke="#ffffff" stroke-width="1.3"/></svg>
<span class="t" style="left:688.20px;top:669.13px;font-size:10.47px;color:#e6ecf0;transform:scaleX(0.9338);">Producto Activo</span>
</div>
</body></html>
